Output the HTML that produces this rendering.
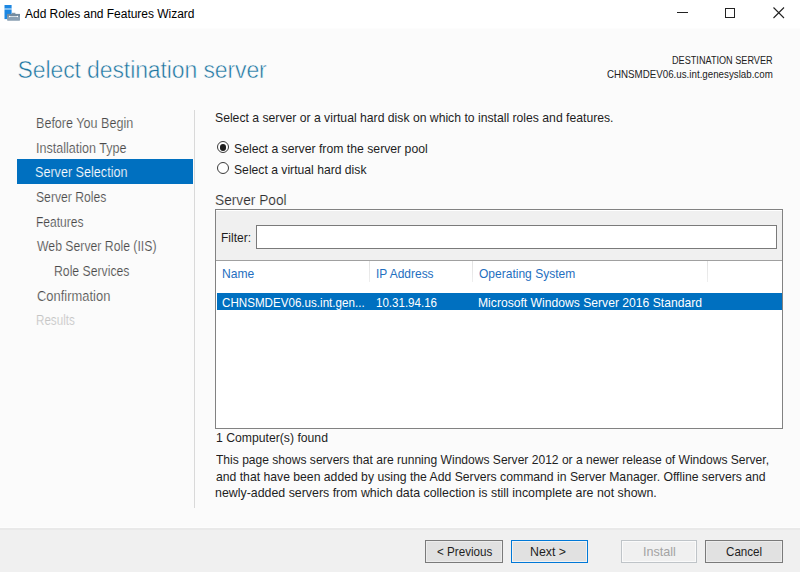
<!DOCTYPE html>
<html><head><meta charset="utf-8">
<style>
html,body{margin:0;padding:0;}
body{width:800px;height:572px;position:relative;overflow:hidden;background:#fbfbfb;font-family:"Liberation Sans",sans-serif;color:#1e1e1e;}
.a{position:absolute;white-space:nowrap;line-height:1;transform-origin:0 0;}
.b{position:absolute;}
</style></head><body>
<div class="b" style="left:0;top:0;width:800px;height:28px;background:#fff"></div>
<div class="b" style="left:0;top:28px;width:800px;height:1px;background:#fdfdfd"></div>
<!-- app icon -->
<svg class="b" style="left:0;top:0" width="24" height="24" viewBox="0 0 24 24">
  <rect x="4.5" y="5" width="7.1" height="3.6" fill="#1c87e2"/>
  <rect x="4.5" y="8.6" width="7.1" height="1" fill="#9ccaf2"/>
  <rect x="4.5" y="9.6" width="7.1" height="9.5" fill="#1c87e2"/>
  <rect x="12" y="12.8" width="3.4" height="1.2" fill="#8398aa"/>
  <rect x="7.1" y="13.9" width="12.9" height="6.8" rx="0.6" fill="#8aa0b3"/>
  <rect x="7.1" y="13.9" width="12.9" height="2.6" fill="#738b9f"/>
  <rect x="9.3" y="16.1" width="8.4" height="0.8" fill="#e8eef3"/>
  <circle cx="9.6" cy="16.5" r="0.7" fill="#fff"/>
  <circle cx="17.4" cy="16.5" r="0.7" fill="#fff"/>
</svg>
<!-- window controls -->
<div class="b" style="left:677px;top:12px;width:11px;height:1px;background:#222"></div>
<div class="b" style="left:725px;top:8px;width:8px;height:8px;border:1px solid #222"></div>
<svg class="b" style="left:773px;top:7px" width="12" height="12" viewBox="0 0 12 12"><path d="M0.5 0.5L11 11M11 0.5L0.5 11" stroke="#222" stroke-width="1.1"/></svg>

<!-- sidebar -->
<div class="b" style="left:17px;top:159px;width:176px;height:25px;background:#0070c0"></div>
<div class="b" style="left:194px;top:110px;width:1px;height:398px;background:#d9d9d9"></div>

<!-- radios -->
<div class="b" style="left:216.8px;top:141.2px;width:10.3px;height:10.3px;border:1px solid #3a3a3a;border-radius:50%;background:#fff"></div>
<div class="b" style="left:219.75px;top:144.15px;width:6.4px;height:6.4px;border-radius:50%;background:#1e1e1e"></div>
<div class="b" style="left:216.8px;top:161.9px;width:10.3px;height:10.3px;border:1px solid #3a3a3a;border-radius:50%;background:#fff"></div>

<!-- server pool -->
<div class="b" style="left:215px;top:209px;width:566px;height:218px;border:1px solid #828282;background:#fff"></div>
<div class="b" style="left:216px;top:210px;width:566px;height:49px;background:#f0f0f0;border-top:1px solid #fff;border-bottom:1px solid #a0a0a0"></div>
<div class="b" style="left:256px;top:225px;width:519px;height:22px;border:1px solid #7a7a7a;background:#fff"></div>
<div class="b" style="left:369px;top:261px;width:1px;height:21px;background:linear-gradient(#e2e2e2,#eeeeee)"></div>
<div class="b" style="left:472px;top:261px;width:1px;height:21px;background:linear-gradient(#e2e2e2,#eeeeee)"></div>
<div class="b" style="left:707px;top:261px;width:1px;height:21px;background:linear-gradient(#e2e2e2,#eeeeee)"></div>
<div class="b" style="left:217px;top:293px;width:565px;height:17px;background:#0070c0"></div>

<!-- footer -->
<div class="b" style="left:0;top:527px;width:800px;height:1px;background:#fdfdfd"></div>
<div class="b" style="left:0;top:528px;width:800px;height:44px;background:#f0f0f0"></div>
<div class="b" style="left:0;top:528px;width:800px;height:2px;background:#e9e9e9"></div>
<div class="b" style="left:425px;top:540px;width:76px;height:21px;border:1px solid #7a7a7a;background:#e1e1e1;box-shadow:inset 0 0 0 1px #ececec"></div>
<div class="b" style="left:511px;top:540px;width:75px;height:21px;border:1px solid #0078d7;background:#e1e1e1;box-shadow:inset 0 0 0 1px #f2f2f2"></div>
<div class="b" style="left:621px;top:540px;width:74px;height:21px;border:1px solid #bfc4c8;background:#f0f0f0;box-shadow:inset 0 0 0 1px #fafafa"></div>
<div class="b" style="left:705px;top:540px;width:76px;height:21px;border:1px solid #7a7a7a;background:#e1e1e1;box-shadow:inset 0 0 0 1px #ececec"></div>

<div class="a" style="left:25px;top:8px;font-size:12px;color:#000;letter-spacing:-0.021px;">Add Roles and Features Wizard</div>
<div class="a" style="left:17.6px;top:59px;font-size:23px;color:#1d75a0;letter-spacing:-0.113px;-webkit-text-stroke:0.5px #fbfbfb;">Select destination server</div>
<div class="a" style="left:672.09px;top:56px;font-size:10px;color:#222;transform:scaleX(0.9128);">DESTINATION SERVER</div>
<div class="a" style="left:606.8px;top:69px;font-size:11px;color:#222;transform:scaleX(0.8861);">CHNSMDEV06.us.int.genesyslab.com</div>
<div class="a" style="left:35.8px;top:116px;font-size:14px;color:#484848;transform:scaleX(0.8981);-webkit-text-stroke:0.2px #fbfbfb;">Before You Begin</div>
<div class="a" style="left:36.1px;top:141px;font-size:14px;color:#484848;transform:scaleX(0.897);-webkit-text-stroke:0.2px #fbfbfb;">Installation Type</div>
<div class="a" style="left:35.4px;top:165px;font-size:14px;color:#fff;transform:scaleX(0.9);-webkit-text-stroke:0.2px #0070c0;">Server Selection</div>
<div class="a" style="left:35.63px;top:190px;font-size:14px;color:#484848;transform:scaleX(0.87);-webkit-text-stroke:0.2px #fbfbfb;">Server Roles</div>
<div class="a" style="left:35.84px;top:215px;font-size:14px;color:#484848;transform:scaleX(0.8611);-webkit-text-stroke:0.2px #fbfbfb;">Features</div>
<div class="a" style="left:36.5px;top:239px;font-size:14px;color:#484848;transform:scaleX(0.8743);-webkit-text-stroke:0.2px #fbfbfb;">Web Server Role (IIS)</div>
<div class="a" style="left:53.93px;top:264px;font-size:14px;color:#484848;transform:scaleX(0.8741);-webkit-text-stroke:0.2px #fbfbfb;">Role Services</div>
<div class="a" style="left:36.5px;top:289px;font-size:14px;color:#484848;transform:scaleX(0.9241);-webkit-text-stroke:0.2px #fbfbfb;">Confirmation</div>
<div class="a" style="left:35.67px;top:313px;font-size:14px;color:#c4c4c4;transform:scaleX(0.8304);-webkit-text-stroke:0.2px #fbfbfb;">Results</div>
<div class="a" style="left:215.06px;top:111px;font-size:13px;color:#1e1e1e;transform:scaleX(0.9379);">Select a server or a virtual hard disk on which to install roles and features.</div>
<div class="a" style="left:233.96px;top:142px;font-size:13px;color:#1e1e1e;transform:scaleX(0.9407);">Select a server from the server pool</div>
<div class="a" style="left:234.06px;top:163px;font-size:13px;color:#1e1e1e;transform:scaleX(0.9355);">Select a virtual hard disk</div>
<div class="a" style="left:215.02px;top:193px;font-size:14px;color:#303030;transform:scaleX(0.9792);-webkit-text-stroke:0.15px #fbfbfb;">Server Pool</div>
<div class="a" style="left:221.28px;top:231px;font-size:13px;color:#1e1e1e;transform:scaleX(0.9226);">Filter:</div>
<div class="a" style="left:222.47px;top:267px;font-size:13px;color:#1f6fc0;transform:scaleX(0.9294);">Name</div>
<div class="a" style="left:375.83px;top:267px;font-size:13px;color:#1f6fc0;transform:scaleX(0.9194);">IP Address</div>
<div class="a" style="left:479.4px;top:267px;font-size:13px;color:#1f6fc0;transform:scaleX(0.925);">Operating System</div>
<div class="a" style="left:222.0px;top:296px;font-size:13px;color:#fff;transform:scaleX(0.8931);">CHNSMDEV06.us.int.gen...</div>
<div class="a" style="left:375.86px;top:296px;font-size:13px;color:#fff;transform:scaleX(0.8888);">10.31.94.16</div>
<div class="a" style="left:477.82px;top:296px;font-size:13px;color:#fff;transform:scaleX(0.9337);">Microsoft Windows Server 2016 Standard</div>
<div class="a" style="left:215.56px;top:431px;font-size:13px;color:#1e1e1e;transform:scaleX(0.939);">1 Computer(s) found</div>
<div class="a" style="left:216.0px;top:453px;font-size:13px;color:#1e1e1e;transform:scaleX(0.9277);">This page shows servers that are running Windows Server 2012 or a newer release of Windows Server,</div>
<div class="a" style="left:216.0px;top:470px;font-size:13px;color:#1e1e1e;transform:scaleX(0.9381);">and that have been added by using the Add Servers command in Server Manager. Offline servers and</div>
<div class="a" style="left:215.05px;top:486px;font-size:13px;color:#1e1e1e;transform:scaleX(0.9524);">newly-added servers from which data collection is still incomplete are not shown.</div>
<div class="a" style="left:436.9px;top:545px;font-size:13px;color:#1e1e1e;transform:scaleX(0.8968);">&lt; Previous</div>
<div class="a" style="left:530.45px;top:545px;font-size:13px;color:#1e1e1e;transform:scaleX(0.9486);">Next &gt;</div>
<div class="a" style="left:642.53px;top:545px;font-size:13px;color:#a3a3a3;transform:scaleX(0.9656);">Install</div>
<div class="a" style="left:726.4px;top:545px;font-size:13px;color:#1e1e1e;transform:scaleX(0.8925);">Cancel</div>
</body></html>
